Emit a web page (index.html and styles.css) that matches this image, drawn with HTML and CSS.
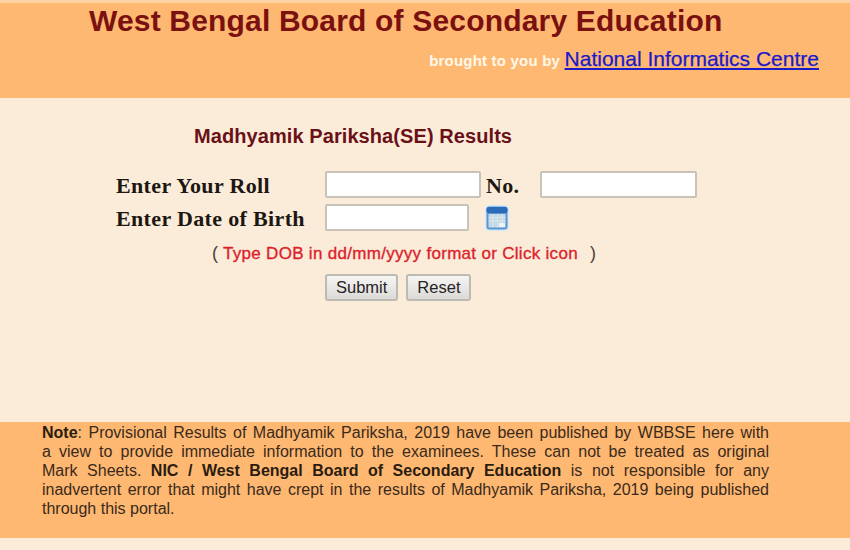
FILE: index.html
```html
<!DOCTYPE html>
<html lang="en">
<head>
<meta charset="utf-8">
<title>West Bengal Board of Secondary Education</title>
<link rel="stylesheet" href="styles.css">
</head>
<body>
<header class="header">
  <h1 class="title">West Bengal Board of Secondary Education</h1>
  <p class="credit"><span class="credit-label">brought to you by</span> <a class="credit-link" href="#">National Informatics Centre</a></p>
</header>
<main class="main">
  <h2 class="subtitle">Madhyamik Pariksha(SE) Results</h2>
  <form class="form">
    <div class="row">
      <label class="label">Enter Your Roll</label>
      <input class="input input-roll" type="text">
      <span class="no">No.</span>
      <input class="input input-no" type="text">
    </div>
    <div class="row">
      <label class="label">Enter Date of Birth</label>
      <input class="input input-dob" type="text">
      <svg class="cal" viewBox="0 0 24 26" width="24" height="26" aria-hidden="true">
        <rect x="0" y="0" width="24" height="26" rx="4" fill="#d5e9f6"/>
        <rect x="1.5" y="1.5" width="21" height="23" rx="3" fill="#5b95cf"/>
        <rect x="1.5" y="2" width="21" height="6" rx="2" fill="#2a6cb8"/>
        <rect x="3.5" y="9" width="17" height="13.5" fill="#c4d9e6"/>
        <path d="M3.5 12.5h17M3.5 16h17M8 9v13.5M12.5 9v13.5M17 9v13.5" stroke="#dfeaef" stroke-width="0.8" fill="none"/>
        <rect x="14" y="18" width="6" height="4" fill="#eef3f6"/>
      </svg>
    </div>
    <p class="hint"><span class="paren">(</span> <span class="hint-text">Type DOB in dd/mm/yyyy format or Click icon</span> <span class="paren paren-end">)</span></p>
    <div class="buttons">
      <button class="btn" type="button">Submit</button>
      <button class="btn" type="button">Reset</button>
    </div>
  </form>
</main>
<footer class="note">
  <p class="note-text">
    <span class="line"><b>Note</b>: Provisional Results of Madhyamik Pariksha, 2019 have been published by WBBSE here with</span>
    <span class="line">a view to provide immediate information to the examinees. These can not be treated as original</span>
    <span class="line">Mark Sheets. <b>NIC / West Bengal Board of Secondary Education</b> is not responsible for any</span>
    <span class="line">inadvertent error that might have crept in the results of Madhyamik Pariksha, 2019 being published</span>
    <span class="line line-last">through this portal.</span>
  </p>
</footer>
<div class="tail"></div>
</body>
</html>
```

FILE: styles.css
```css
* { box-sizing: border-box; }
html, body { margin: 0; padding: 0; }
body {
  width: 850px;
  height: 550px;
  overflow: hidden;
  background: #fbecd9;
  font-family: "Liberation Sans", Arial, sans-serif;
  display: flex;
  flex-direction: column;
}
.header {
  height: 98px;
  flex: none;
  background: #feb871;
  border-top: 3px solid #fdd3a5;
  padding: 1px 31px 0 89px;
}
.title {
  margin: 0;
  font-size: 30px;
  line-height: 34px;
  font-weight: 700;
  color: #7a1010;
  letter-spacing: 0.18px;
  white-space: nowrap;
}
.credit {
  margin: 9px 0 0;
  text-align: right;
  line-height: 24px;
}
.credit-label {
  color: #fff8ea;
  font-size: 15px;
  font-weight: 700;
  letter-spacing: 0.2px;
}
.credit-link {
  color: #1a1acb;
  font-size: 21px;
  text-decoration: underline;
  -webkit-text-stroke: 0.25px #1a1acb;
}
.main {
  height: 324px;
  flex: none;
  padding-top: 26px;
}
.subtitle {
  margin: 0 0 0 194px;
  font-size: 20px;
  line-height: 24px;
  font-weight: 700;
  color: #6a1018;
  letter-spacing: 0.08px;
}
.form { margin-top: 20px; }
.row {
  display: flex;
  align-items: center;
  height: 33px;
  padding-left: 116px;
}
.row:first-child { padding-right: 153px; }
.label {
  width: 209px;
  flex: none;
  padding-top: 2px;
  font-family: "Liberation Serif", "Times New Roman", serif;
  font-size: 22px;
  font-weight: 700;
  letter-spacing: 0.35px;
  color: #1c1712;
}
.input {
  height: 27px;
  background: #fff;
  border: 2px solid #c9c2b8;
  border-radius: 2px;
  padding: 0;
}
.input-roll { width: 156px; }
.input-no { width: 157px; margin-left: auto; }
.input-dob { width: 144px; }
.no {
  margin-left: 5px;
  padding-top: 2px;
  font-family: "Liberation Serif", "Times New Roman", serif;
  font-size: 22px;
  font-weight: 700;
  letter-spacing: 0.35px;
  color: #1c1712;
}
.cal { margin-left: 16px; flex: none; filter: blur(0.4px); }
.hint {
  margin: 8px 0 0 212px;
  font-size: 17px;
  line-height: 22px;
  color: #dc1f2c;
  font-weight: 400;
  letter-spacing: 0.3px;
}
.hint-text { -webkit-text-stroke: 0.35px #dc1f2c; }
.paren { color: #4b4138; font-size: 18px; }
.paren-end { margin-left: 7px; }
.buttons {
  display: flex;
  gap: 8px;
  margin: 9px 0 0 325px;
}
.btn {
  height: 27px;
  padding: 0 9px;
  font-family: "Liberation Sans", Arial, sans-serif;
  font-size: 16.5px;
  color: #26231f;
  background: linear-gradient(#f6f5f3, #dcdad7);
  border: 2px solid #bdb9b3;
  border-radius: 3px;
}
.note {
  height: 116px;
  flex: none;
  background: #feb871;
  padding: 1px 81px 0 42px;
}
.note-text {
  margin: 0;
  font-size: 16px;
  line-height: 19px;
  color: #3a2a1c;
}
.line {
  display: block;
  text-align: justify;
  text-align-last: justify;
  white-space: normal;
}
.line-last { text-align-last: left; }
.note-text b { color: #2a1c10; }
.tail { flex: 1; }
```
